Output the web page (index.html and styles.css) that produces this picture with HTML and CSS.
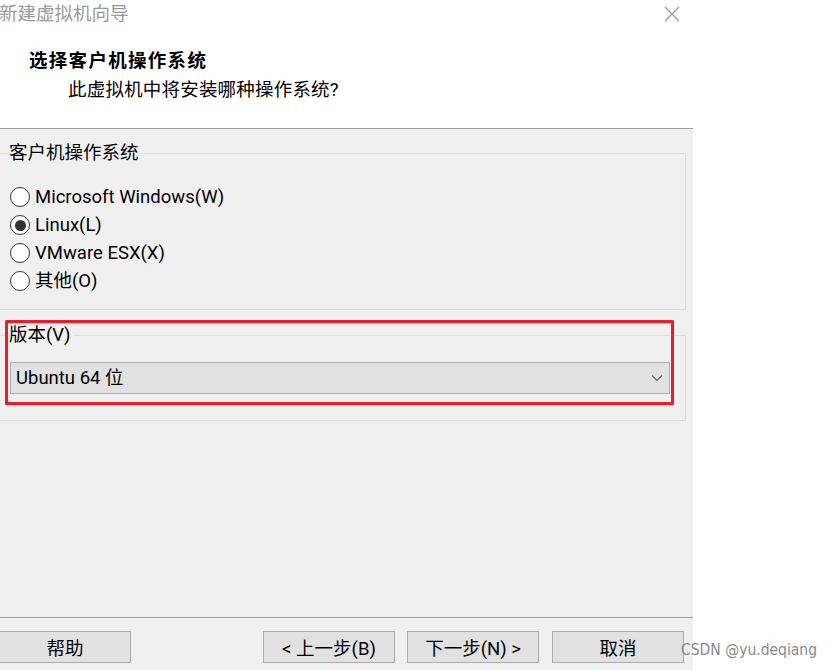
FILE: index.html
```html
<!DOCTYPE html>
<html lang="zh-CN">
<head>
<meta charset="utf-8">
<title>新建虚拟机向导</title>
<link rel="stylesheet" href="styles.css">
</head>
<body>
<div class="page">
  <div class="dialog">
    <header class="header">
      <div class="titlebar">
        <span class="title">新建虚拟机向导</span>
        <svg class="close" width="16" height="16" viewBox="0 0 16 16" aria-hidden="true">
          <path d="M1 1 L15 15 M15 1 L1 15" stroke="#9a9a9a" stroke-width="1.2" fill="none"/>
        </svg>
      </div>
      <h1 class="heading">选择客户机操作系统</h1>
      <p class="subtitle">此虚拟机中将安装哪种操作系统?</p>
    </header>
    <main class="body">
      <fieldset class="group group-os">
        <legend class="legend">客户机操作系统</legend>
        <div class="radios">
          <label class="radio"><span class="circle"></span>Microsoft Windows(W)</label>
          <label class="radio"><span class="circle checked"></span>Linux(L)</label>
          <label class="radio"><span class="circle"></span>VMware ESX(X)</label>
          <label class="radio"><span class="circle"></span>其他(O)</label>
        </div>
      </fieldset>
      <div class="version-wrap">
        <fieldset class="group group-version">
          <legend class="legend">版本(V)</legend>
          <div class="select">
            <span class="select-text">Ubuntu 64 位</span>
            <svg class="chevron" width="12" height="8" viewBox="0 0 12 8" aria-hidden="true">
              <path d="M1 1.5 L6 6.5 L11 1.5" stroke="#606060" stroke-width="1.1" fill="none"/>
            </svg>
          </div>
        </fieldset>
        <div class="highlight"></div>
      </div>
    </main>
    <footer class="footer">
      <button class="btn btn-help">帮助</button>
      <div class="btn-group">
        <button class="btn">&lt; 上一步(B)</button>
        <button class="btn">下一步(N) &gt;</button>
        <button class="btn btn-cancel">取消</button>
      </div>
    </footer>
  </div>
  <div class="watermark">CSDN @yu.deqiang</div>
</div>
</body>
</html>
```

FILE: styles.css
```css
* { box-sizing: border-box; }

html, body {
  margin: 0;
  padding: 0;
  background: #ffffff;
}

body {
  font-family: Roboto, "Noto Sans CJK SC", sans-serif;
  font-size: 18.5px;
  color: #000;
  overflow: hidden;
}

.page {
  position: relative;
  width: 834px;
  height: 670px;
}

.dialog {
  width: 693px;
  height: 670px;
  display: flex;
  flex-direction: column;
  background: #f0f0f0;
}

.header {
  height: 129px;
  background: #ffffff;
  border-bottom: 1px solid #a0a0a0;
  display: flex;
  flex-direction: column;
}

.titlebar {
  height: 28px;
  display: flex;
  align-items: center;
  justify-content: space-between;
  padding-right: 13px;
}

.title {
  color: #9a9a9a;
  line-height: 28px;
  margin-left: -1px;
}

.close {
  display: block;
}

.heading {
  margin: 19px 0 0 29px;
  font-size: 18.5px;
  font-weight: bold;
  line-height: 28px;
  letter-spacing: 1.3px;
}

.subtitle {
  margin: 1px 0 0 68px;
  line-height: 28px;
  letter-spacing: 0.2px;
}

.body {
  flex: 1;
  display: flex;
  flex-direction: column;
  border-bottom: 1px solid #a0a0a0;
}

.group {
  margin: 0 7px 0 -1px;
  border: 1px solid #dcdcdc;
  padding: 0 10px;
  min-width: 0;
}

.legend {
  padding: 0 2px 0 0;
  margin-left: -1px;
  line-height: 28px;
  color: #000;
}

.group-os {
  margin-top: 10px;
  padding-bottom: 14px;
}

.radios {
  padding-top: 16px;
  display: flex;
  flex-direction: column;
}

.radio {
  display: flex;
  align-items: center;
  height: 28px;
  line-height: 28px;
  white-space: nowrap;
}

.circle {
  width: 20px;
  height: 20px;
  border-radius: 50%;
  border: 1px solid #333333;
  background: #ffffff;
  margin-right: 5px;
  display: flex;
  align-items: center;
  justify-content: center;
  flex: none;
}

.circle.checked::after {
  content: "";
  width: 11px;
  height: 11px;
  border-radius: 50%;
  background: #333333;
}

.version-wrap {
  position: relative;
  margin-top: 11px;
}

.group-version {
  padding-top: 13px;
  padding-bottom: 26px;
}

.select {
  height: 32px;
  width: 660px;
  background: #e1e1e1;
  border: 1px solid #adadad;
  display: flex;
  align-items: center;
  justify-content: space-between;
  padding: 0 6px 0 5px;
}

.select-text {
  line-height: 28px;
}

.chevron {
  display: block;
}

.highlight {
  position: absolute;
  left: 5px;
  top: -1px;
  width: 669px;
  height: 85px;
  border: 3px solid #ee1c25;
  border-radius: 1px;
  pointer-events: none;
}

.footer {
  height: 52px;
  display: flex;
  align-items: flex-start;
  padding-top: 13px;
}

.btn {
  width: 132px;
  height: 32px;
  background: #e1e1e1;
  border: 1px solid #adadad;
  border-radius: 0;
  font-family: Roboto, "Noto Sans CJK SC", sans-serif;
  font-size: 18.5px;
  color: #000;
  padding: 3px 0 0 0;
  line-height: 26px;
}

.btn-help {
  margin-left: -1px;
}

.btn-group {
  margin-left: auto;
  margin-right: 9px;
  display: flex;
  gap: 12px;
}

.btn-cancel {
  margin-left: 1px;
}

.watermark {
  position: absolute;
  left: 681px;
  top: 641px;
  font-family: "DejaVu Sans Condensed", "Liberation Sans Narrow", "Liberation Sans", sans-serif;
  font-stretch: condensed;
  font-size: 15.5px;
  line-height: 18px;
  color: #8a8a8a;
  white-space: nowrap;
}
```
